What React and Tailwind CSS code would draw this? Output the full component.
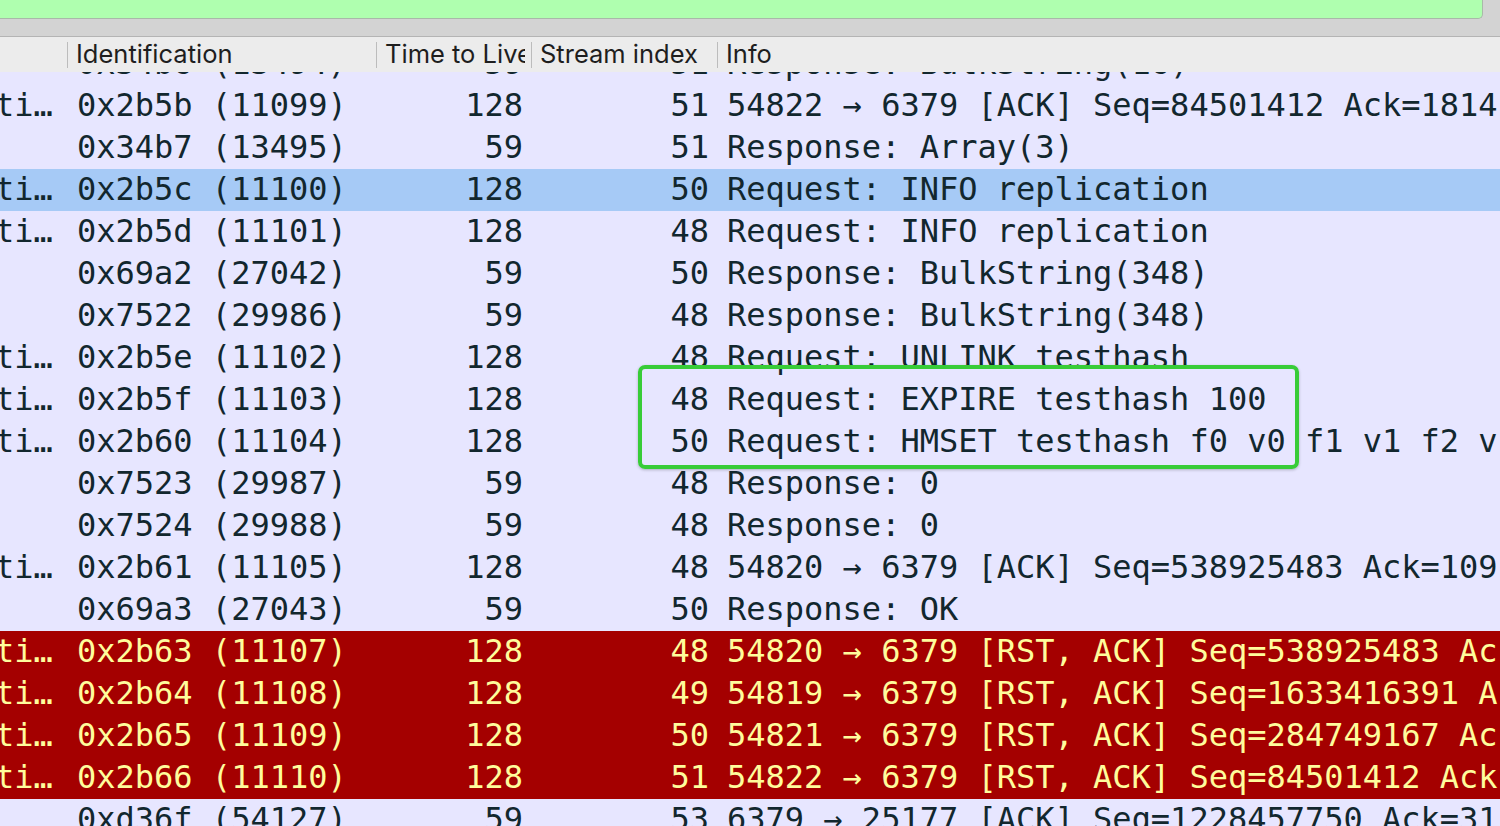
import React from 'react';

const ROWS = [
  { c0: '', id: '0x34b6 (13494)', ttl: '59', si: '51', info: 'Response: BulkString(16)' },
  { c0: 'ti…', id: '0x2b5b (11099)', ttl: '128', si: '51', info: '54822 → 6379 [ACK] Seq=84501412 Ack=1814' },
  { c0: '', id: '0x34b7 (13495)', ttl: '59', si: '51', info: 'Response: Array(3)' },
  { c0: 'ti…', id: '0x2b5c (11100)', ttl: '128', si: '50', info: 'Request: INFO replication', kind: 'sel' },
  { c0: 'ti…', id: '0x2b5d (11101)', ttl: '128', si: '48', info: 'Request: INFO replication' },
  { c0: '', id: '0x69a2 (27042)', ttl: '59', si: '50', info: 'Response: BulkString(348)' },
  { c0: '', id: '0x7522 (29986)', ttl: '59', si: '48', info: 'Response: BulkString(348)' },
  { c0: 'ti…', id: '0x2b5e (11102)', ttl: '128', si: '48', info: 'Request: UNLINK testhash' },
  { c0: 'ti…', id: '0x2b5f (11103)', ttl: '128', si: '48', info: 'Request: EXPIRE testhash 100' },
  { c0: 'ti…', id: '0x2b60 (11104)', ttl: '128', si: '50', info: 'Request: HMSET testhash f0 v0 f1 v1 f2 v' },
  { c0: '', id: '0x7523 (29987)', ttl: '59', si: '48', info: 'Response: 0' },
  { c0: '', id: '0x7524 (29988)', ttl: '59', si: '48', info: 'Response: 0' },
  { c0: 'ti…', id: '0x2b61 (11105)', ttl: '128', si: '48', info: '54820 → 6379 [ACK] Seq=538925483 Ack=109' },
  { c0: '', id: '0x69a3 (27043)', ttl: '59', si: '50', info: 'Response: OK' },
  { c0: 'ti…', id: '0x2b63 (11107)', ttl: '128', si: '48', info: '54820 → 6379 [RST, ACK] Seq=538925483 Ac', kind: 'rst' },
  { c0: 'ti…', id: '0x2b64 (11108)', ttl: '128', si: '49', info: '54819 → 6379 [RST, ACK] Seq=1633416391 A', kind: 'rst' },
  { c0: 'ti…', id: '0x2b65 (11109)', ttl: '128', si: '50', info: '54821 → 6379 [RST, ACK] Seq=284749167 Ac', kind: 'rst' },
  { c0: 'ti…', id: '0x2b66 (11110)', ttl: '128', si: '51', info: '54822 → 6379 [RST, ACK] Seq=84501412 Ack', kind: 'rst' },
  { c0: '', id: '0xd36f (54127)', ttl: '59', si: '53', info: '6379 → 25177 [ACK] Seq=1228457750 Ack=31' },
];

const rowColor = {
  sel: 'bg-[#a6caf6] text-[#12272e]',
  rst: 'bg-[#a40000] text-[#fffc9c]',
};

function Sep() {
  return <div className="w-px h-[26px] bg-[#bcbcbc] shrink-0" />;
}

export default function App() {
  return (
    <div className="w-[1500px] h-[826px] overflow-hidden bg-[#e7e6ff] flex flex-col relative">
      {/* filter bar */}
      <div className="h-[37px] shrink-0 bg-[#d3d3d3] border-b border-[#b4b4b4] flex">
        <div className="w-[1484px] h-[19px] bg-[#afffaf] border-r border-b border-[#a9b9a9] rounded-br-[5px] -ml-px" />
      </div>

      {/* column header */}
      <div className="h-[35px] shrink-0 bg-[#ececec] flex items-center text-[#1e1e1e] text-[25.5px] whitespace-nowrap z-10"
        style={{ fontFamily: 'Inter, "Liberation Sans", sans-serif' }}>
        <div className="w-[67px] shrink-0" />
        <Sep />
        <div className="w-[308px] shrink-0 pl-[8px] overflow-hidden">Identification</div>
        <Sep />
        <div className="w-[154px] shrink-0 pl-[8px] pr-[6px]">
          <div className="overflow-hidden">Time to Live</div>
        </div>
        <Sep />
        <div className="w-[185px] shrink-0 pl-[8px] overflow-hidden">Stream index</div>
        <Sep />
        <div className="flex-1 pl-[8px]">Info</div>
      </div>

      {/* packet list */}
      <div className="flex-1 overflow-hidden">
        <div className="-mt-[29px] text-[32px] leading-[40px] text-[#12272e] whitespace-nowrap"
          style={{ fontFamily: '"DejaVu Sans Mono", monospace' }}>
          {ROWS.map((r, i) => (
            <div key={i} className={`grid grid-cols-[67px_309px_155px_186px_1fr] h-[42px] ${rowColor[r.kind] || ''}`}>
              <div className="overflow-hidden"><span className="inline-block -ml-[5px]">{r.c0}</span></div>
              <div className="pl-[10px] overflow-hidden">{r.id}</div>
              <div className="text-right pr-[8px] overflow-hidden">{r.ttl}</div>
              <div className="text-right pr-[8px] overflow-hidden">{r.si}</div>
              <div className="pl-[10px] overflow-hidden">{r.info}</div>
            </div>
          ))}
        </div>
      </div>

      {/* highlight box */}
      <div className="absolute left-[638px] top-[365px] w-[661px] h-[104px] border-[4px] border-[#38cc38] rounded-[7px] shadow-[0_1px_3px_rgba(0,0,0,0.25)]" />
    </div>
  );
}
